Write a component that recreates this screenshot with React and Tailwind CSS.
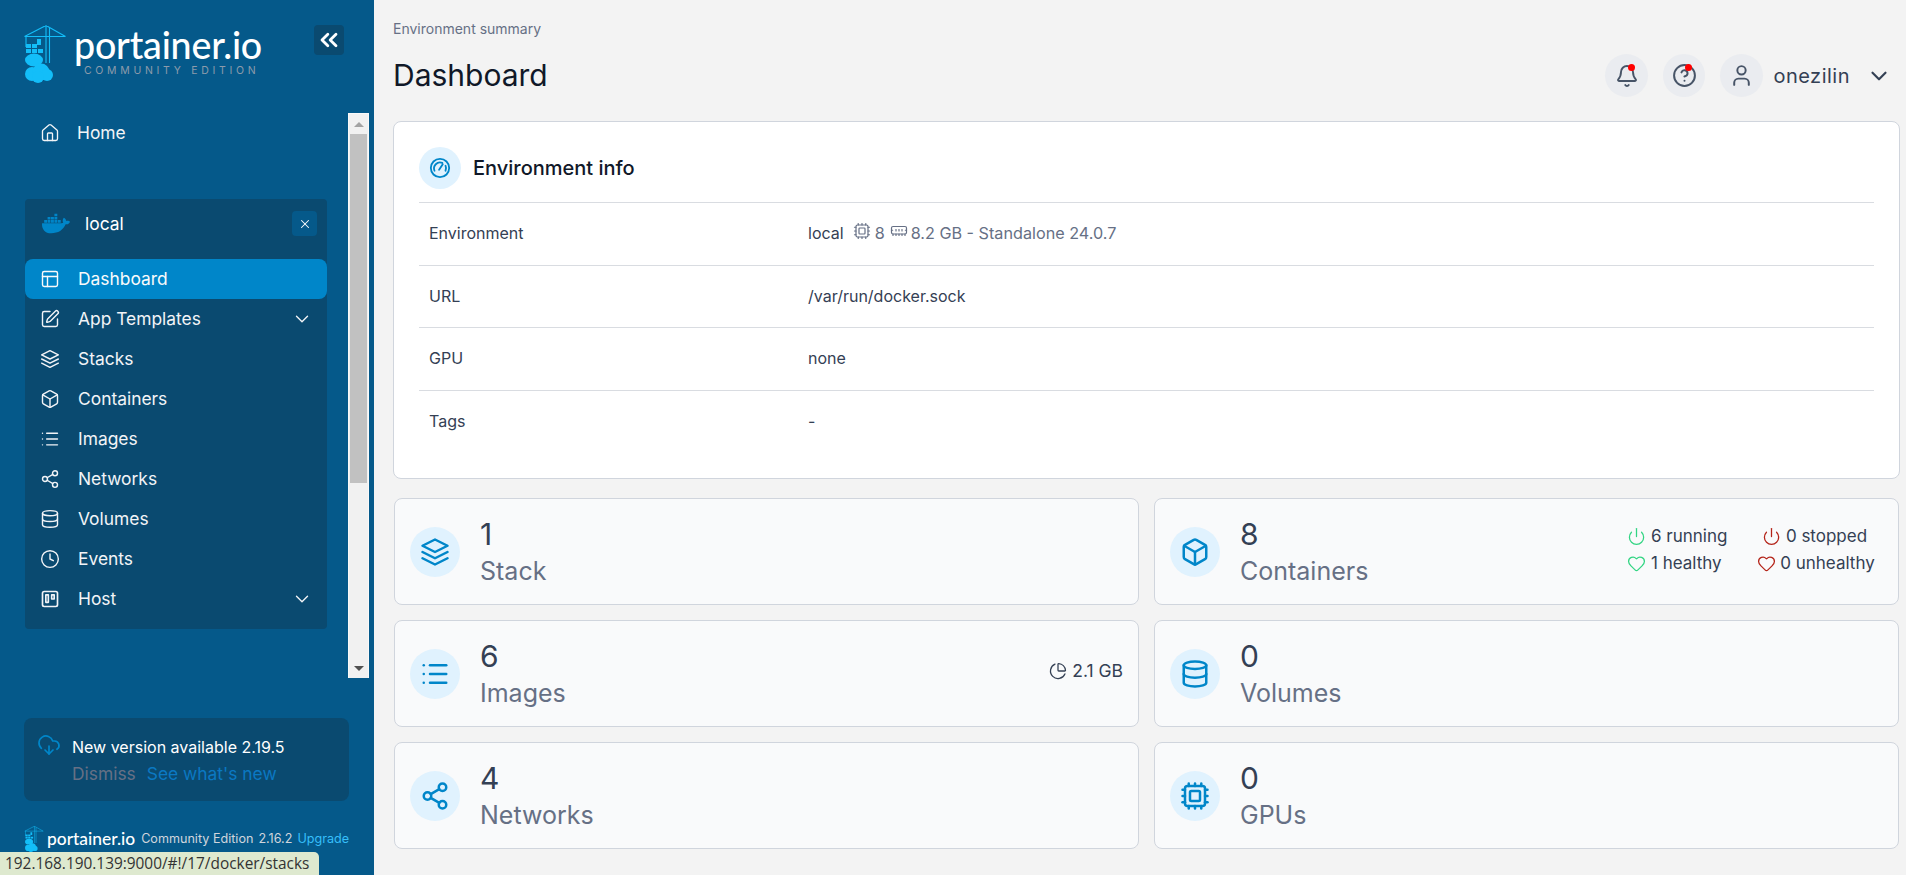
import {
  House, PanelsTopLeft, SquarePen, Box, List, Share2, Database, Clock,
  ChevronDown, ChevronsLeft, X, Cpu, MemoryStick, Power, Heart, ChartPie,
  CloudDownload, Bell, CircleHelp, User,
} from 'lucide-react';
import { FaDocker } from 'react-icons/fa';

function CraneLogo({ className }) {
  return (
    <svg viewBox="0 0 42 58" className={className}>
      <g stroke="#13bef9" fill="none" strokeWidth="1.1">
        <path d="M0.5 11.5H41.5M22 0.5L0.5 11.5M22 0.5L41.5 11.5M22 0V38M25.5 3V38M2 11.500V22" />
      </g>
      <g fill="#13bef9">
        <rect x="13" y="14" width="4" height="6" />
        <rect x="2" y="19" width="5" height="4" />
        <rect x="8" y="19" width="5" height="4" />
        <rect x="2" y="24" width="5" height="4" />
        <rect x="8" y="24" width="5" height="4" />
        <rect x="14" y="24" width="5" height="4" />
        <ellipse cx="10" cy="35" rx="9" ry="6.5" />
        <circle cx="8" cy="49" r="7" />
        <circle cx="17" cy="47" r="8.5" />
        <circle cx="23" cy="50" r="6" />
        <circle cx="14" cy="52" r="6" />
      </g>
    </svg>
  );
}

function HostIcon({ className }) {
  return (
    <svg viewBox="0 0 24 24" fill="none" stroke="currentColor" strokeWidth="2" strokeLinecap="round" strokeLinejoin="round" className={className}>
      <rect x="3" y="3" width="18" height="18" rx="2" />
      <rect x="7" y="7" width="3" height="9" />
      <rect x="14" y="7" width="3" height="5" />
    </svg>
  );
}

function LayersIcon({ className, strokeWidth = 2 }) {
  return (
    <svg viewBox="0 0 24 24" fill="none" stroke="currentColor" strokeWidth={strokeWidth} strokeLinecap="round" strokeLinejoin="round" className={className}>
      <path d="M12 2L2 7l10 5 10-5-10-5z" />
      <path d="M2 17l10 5 10-5" />
      <path d="M2 12l10 5 10-5" />
    </svg>
  );
}

function GaugeIcon({ className }) {
  return (
    <svg viewBox="0 0 24 24" fill="none" stroke="currentColor" strokeWidth="2" strokeLinecap="round" strokeLinejoin="round" className={className}>
      <circle cx="12" cy="12" r="10" />
      <path d="M6 15a6.5 6.5 0 0 1 8.5-8.5M18 9.5a6.500 6.500 0 0 1 0 5.500M11 14l4-6" />
    </svg>
  );
}

const navItems = [
  { label: 'App Templates', icon: SquarePen, caret: true },
  { label: 'Stacks', icon: LayersIcon },
  { label: 'Containers', icon: Box },
  { label: 'Images', icon: List },
  { label: 'Networks', icon: Share2 },
  { label: 'Volumes', icon: Database },
  { label: 'Events', icon: Clock },
  { label: 'Host', icon: HostIcon, caret: true },
];

function Sidebar() {
  return (
    <aside className="w-[374px] h-[875px] shrink-0 bg-[#05598a] text-white text-[17.4px] overflow-hidden">
      <div className="h-[113px] flex items-start pt-[25px] pl-[24px]">
        <CraneLogo className="w-[42px] h-[58px] shrink-0" />
        <div className="ml-[8px] w-[224px]">
          <div className="text-[37.6px] leading-[40px] font-medium tracking-[-0.2px] font-['Lato',sans-serif]">portainer.io</div>
          <div className="ml-[10px] text-[10.5px] leading-[12px] tracking-[3.7px] text-[#8c9bab] whitespace-nowrap">COMMUNITY EDITION</div>
        </div>
        <button className="ml-[16px] w-[30px] h-[30px] rounded bg-[#0a4a70] flex items-center justify-center">
          <ChevronsLeft className="w-[28px] h-[28px]" strokeWidth={2.4} />
        </button>
      </div>

      <div className="flex h-[565px]">
        <div className="w-[348px] pl-[25px] pr-[21px]">
          <div className="h-[40px] flex items-center pl-[15px] text-[#f2f4f7]">
            <House className="w-[20px] h-[20px]" strokeWidth={1.6} />
            <span className="ml-[17px]">Home</span>
          </div>
          <div className="mt-[46px] bg-[#0a4a70] rounded h-[430px]">
            <div className="h-[60px] flex items-start pt-[12px] pl-[17px] pr-[10px]">
              <FaDocker className="w-[28px] h-[25px] text-[#0086c9]" />
              <span className="ml-[15px] flex-1 leading-[25px]">local</span>
              <span className="w-[25px] h-[25px] rounded bg-[#05598a] flex items-center justify-center">
                <X className="w-[14px] h-[14px]" strokeWidth={1.8} />
              </span>
            </div>
            <div className="h-[40px] rounded-lg bg-[#0086c9] flex items-center pl-[15px] text-[#f9fafb]">
              <PanelsTopLeft className="w-[20px] h-[20px]" strokeWidth={1.7} />
              <span className="ml-[18px]">Dashboard</span>
            </div>
            {navItems.map(item => (
              <div key={item.label} className="h-[40px] flex items-center pl-[15px] pr-[14px] text-[#f2f4f7]">
                <item.icon className="w-[20px] h-[20px] shrink-0" strokeWidth={1.7} />
                <span className="ml-[18px] flex-1">{item.label}</span>
                {item.caret && <ChevronDown className="w-[22px] h-[22px]" strokeWidth={1.5} />}
              </div>
            ))}
          </div>
        </div>
        {/* browser scrollbar */}
        <div className="w-[21px] bg-[#f1f1f1] border-x border-t border-white/60 flex flex-col items-center">
          <div className="h-[20px] flex items-center justify-center">
            <div className="w-0 h-0 border-x-[5px] border-x-transparent border-b-[5px] border-b-[#a3a3a3]" />
          </div>
          <div className="w-[17px] h-[349px] bg-[#c1c1c1]" />
          <div className="flex-1" />
          <div className="h-[20px] flex items-center justify-center">
            <div className="w-0 h-0 border-x-[5px] border-x-transparent border-t-[5px] border-t-[#505050]" />
          </div>
        </div>
      </div>

      <div className="mt-[40px] ml-[24px] w-[325px] h-[83px] rounded-lg bg-[#0a4a70] flex pl-[13px] pt-[15px]">
        <CloudDownload className="w-[24px] h-[24px] text-[#0086c9]" strokeWidth={1.7} />
        <div className="ml-[11px] pt-[1px] leading-[27px]">
          <div className="text-[16px] leading-[26px] text-white">New version available 2.19.5</div>
          <div className="flex gap-[11px]">
            <span className="text-[#667085]">Dismiss</span>
            <span className="text-[#0b78c2]">See what's new</span>
          </div>
        </div>
      </div>

      <div className="mt-[25px] ml-[24px] flex items-center h-[26px]">
        <CraneLogo className="w-[20px] h-[26px] shrink-0" />
        <span className="ml-[3px] text-[17.4px] font-medium font-['Lato',sans-serif]">portainer.io</span>
        <span className="ml-[6px] text-[12.6px] text-[#d0d5dd]">Community Edition</span>
        <span className="ml-[5px] text-[12.6px] text-[#d0d5dd]">2.16.2</span>
        <span className="ml-[5px] text-[12.6px] text-[#36bffa]">Upgrade</span>
      </div>
    </aside>
  );
}

function Stat({ icon: Icon, count, label, children }) {
  return (
    <div className="h-[107px] rounded-lg border border-[#d0d5dd] bg-[#f9fafb] flex items-center px-[15px]">
      <div className="w-[50px] h-[50px] rounded-full bg-[#e0f2fe] flex items-center justify-center">
        <Icon className="w-[30px] h-[30px] text-[#0086c9]" strokeWidth={2} />
      </div>
      <div className="ml-[20px] flex-1">
        <div className="text-[30px] leading-[38px] text-[#344054]">{count}</div>
        <div className="text-[25px] leading-[36px] text-[#667085]">{label}</div>
      </div>
      {children}
    </div>
  );
}

function InfoRow({ label, last, children }) {
  return (
    <div className={`h-[62.5px] flex items-center px-[10px] pb-[1px] text-[16px] text-[#344054] ${last ? '' : 'border-b border-[#d9dce1]'}`}>
      <div className="w-[379px]">{label}</div>
      <div className="flex items-center">{children}</div>
    </div>
  );
}

export default function App() {
  return (
    <div className="relative flex w-[1906px] h-[875px] overflow-hidden bg-[#f3f3f3] font-['Inter',sans-serif]">
      <Sidebar />

      <main className="flex-1 pl-[19px] pr-[6px]">
        <header className="h-[121px] flex items-start">
          <div className="flex-1">
            <div className="pt-[19px] text-[14px] leading-[20px] text-[#667085]">Environment summary</div>
            <h1 className="mt-[15px] text-[30px] leading-[42px] text-[#101828]">Dashboard</h1>
          </div>
          <div className="flex items-center pt-[54px]">
            <div className="relative w-[43px] h-[43px] rounded-full bg-[#eaecf0] flex items-center justify-center text-[#475467]">
              <Bell className="w-[24px] h-[24px]" strokeWidth={1.9} />
              <span className="absolute top-[10px] left-[23px] w-[7px] h-[7px] rounded-full bg-[#ff0000]" />
            </div>
            <div className="relative ml-[15px] w-[42px] h-[43px] rounded-full bg-[#eaecf0] flex items-center justify-center text-[#475467]">
              <CircleHelp className="w-[25px] h-[25px]" strokeWidth={1.9} />
              <span className="absolute top-[10px] left-[22px] w-[7px] h-[7px] rounded-full bg-[#ff0000]" />
            </div>
            <div className="ml-[15px] w-[43px] h-[43px] rounded-full bg-[#eaecf0] flex items-center justify-center text-[#475467]">
              <User className="w-[25px] h-[25px]" strokeWidth={1.9} />
            </div>
            <span className="ml-[10px] text-[20px] tracking-[0.5px] text-[#344054]">onezilin</span>
            <ChevronDown className="ml-[16px] mr-[8px] w-[26px] h-[26px] text-[#344054]" strokeWidth={2} />
          </div>
        </header>

        <section className="h-[358px] rounded-lg border border-[#d0d5dd] bg-white px-[25px] pt-[25px]">
          <div className="h-[56px] flex items-start border-b border-[#d9dce1]">
            <div className="w-[42px] h-[42px] rounded-full bg-[#e0f2fe] flex items-center justify-center">
              <GaugeIcon className="w-[22px] h-[22px] text-[#0086c9]" />
            </div>
            <span className="ml-[12px] text-[20px] leading-[42px] font-medium text-[#101828]">Environment info</span>
          </div>
          <InfoRow label="Environment">
            <span>local</span>
            <span className="ml-[9px] flex items-center text-[16.2px] text-[#667085]">
              <Cpu className="w-[18px] h-[18px] -mt-[4px]" strokeWidth={1.6} />
              <span className="ml-[4px]">8</span>
              <MemoryStick className="ml-[5px] w-[18px] h-[18px] -mt-[4px]" strokeWidth={1.6} />
              <span className="ml-[3px]">8.2 GB - Standalone 24.0.7</span>
            </span>
          </InfoRow>
          <InfoRow label="URL">/var/run/docker.sock</InfoRow>
          <InfoRow label="GPU">none</InfoRow>
          <InfoRow label="Tags" last>-</InfoRow>
        </section>

        <div className="mt-[19px] mx-px grid grid-cols-2 gap-[15px]">
          <Stat icon={LayersIcon} count="1" label="Stack" />
          <Stat icon={Box} count="8" label="Containers">
            <div className="grid grid-cols-[130px_119px] gap-y-[8px] mr-[7px] text-[17px] leading-[19px] text-[#344054] -mt-[3px]">
              <div className="flex items-center gap-[5px]"><Power className="w-[19px] h-[19px] text-[#32d583]" strokeWidth={1.6} />6 running</div>
              <div className="flex items-center justify-center gap-[5px] pr-[4px]"><Power className="w-[19px] h-[19px] text-[#b42318]" strokeWidth={1.6} />0 stopped</div>
              <div className="flex items-center gap-[5px]"><Heart className="w-[19px] h-[19px] text-[#32d583]" strokeWidth={1.6} />1 healthy</div>
              <div className="flex items-center justify-center gap-[4px] pr-[1px]"><Heart className="w-[19px] h-[19px] text-[#b42318]" strokeWidth={1.6} />0 unhealthy</div>
            </div>
          </Stat>
          <Stat icon={List} count="6" label="Images">
            <div className="flex items-center gap-[5px] text-[17.5px] text-[#344054] -mt-[5px]">
              <ChartPie className="w-[18px] h-[18px]" strokeWidth={1.7} />2.1 GB
            </div>
          </Stat>
          <Stat icon={Database} count="0" label="Volumes" />
          <Stat icon={Share2} count="4" label="Networks" />
          <Stat icon={Cpu} count="0" label="GPUs" />
        </div>
      </main>

      {/* browser status bubble */}
      <div className="absolute left-0 bottom-0 w-[319px] h-[23px] bg-[#dee9cf] rounded-tr-[5px] pl-[5px] text-[15.4px] leading-[23px] text-[#333] whitespace-nowrap font-['Open_Sans',sans-serif]">
        192.168.190.139:9000/#!/17/docker/stacks
      </div>
    </div>
  );
}
